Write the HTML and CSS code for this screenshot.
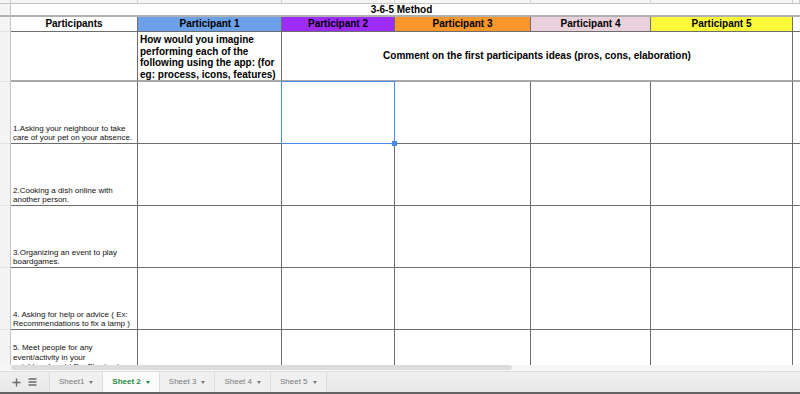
FILE: index.html
```html
<!DOCTYPE html>
<html>
<head>
<meta charset="utf-8">
<link rel="stylesheet" href="styles.css">
</head>
<body>
<div class="app">
  <div class="sheet">
    <!-- top strip (column headers cropped) -->
    <div class="c g strip"></div>
    <div class="c strip"></div>
    <div class="c strip"></div>
    <div class="c strip"></div>
    <div class="c strip"></div>
    <div class="c strip"></div>
    <div class="c strip"></div>
    <div class="c strip last"></div>

    <!-- title row -->
    <div class="c g trow"></div>
    <div class="c title">3-6-5 Method</div>

    <!-- header row -->
    <div class="c g"></div>
    <div class="c hd">Participants</div>
    <div class="c hd p1">Participant 1</div>
    <div class="c hd p2">Participant 2</div>
    <div class="c hd p3">Participant 3</div>
    <div class="c hd p4">Participant 4</div>
    <div class="c hd p5">Participant 5</div>
    <div class="c last"></div>

    <!-- question row -->
    <div class="c g qrow"></div>
    <div class="c qrow"></div>
    <div class="c qrow question">How would you imagine performing each of the following using the app: (for eg: process, icons, features)</div>
    <div class="c qrow comment">Comment on the first participants ideas (pros, cons, elaboration)</div>
    <div class="c qrow last"></div>

    <!-- data rows -->
    <div class="c g"></div>
    <div class="c item">1.Asking your neighbour to take care of your pet on your absence.</div>
    <div class="c"></div>
    <div class="c"></div>
    <div class="c"></div>
    <div class="c"></div>
    <div class="c"></div>
    <div class="c last"></div>

    <div class="c g"></div>
    <div class="c item">2.Cooking a dish online with another person.</div>
    <div class="c"></div>
    <div class="c"></div>
    <div class="c"></div>
    <div class="c"></div>
    <div class="c"></div>
    <div class="c last"></div>

    <div class="c g"></div>
    <div class="c item">3.Organizing an event to play boardgames.</div>
    <div class="c"></div>
    <div class="c"></div>
    <div class="c"></div>
    <div class="c"></div>
    <div class="c"></div>
    <div class="c last"></div>

    <div class="c g"></div>
    <div class="c item">4. Asking for help or advice ( Ex: Recommendations to fix a lamp )</div>
    <div class="c"></div>
    <div class="c"></div>
    <div class="c"></div>
    <div class="c"></div>
    <div class="c"></div>
    <div class="c last"></div>

    <div class="c g"></div>
    <div class="c item top">5. Meet people for any event/activity in your neighbourhood ( Ex: Sharing )</div>
    <div class="c"></div>
    <div class="c"></div>
    <div class="c"></div>
    <div class="c"></div>
    <div class="c"></div>
    <div class="c last"></div>

    <div class="selbox"><div class="handle"></div></div>
  </div>

  <div class="scroll"><div class="thumb"></div></div>

  <div class="tabbar">
    <div class="tools">
      <svg class="ico" width="9" height="9" viewBox="0 0 9 9"><path d="M4.5 0.5v8M0.5 4.5h8" stroke="#6b6b6b" stroke-width="1.4" fill="none"/></svg>
      <svg class="ico" width="9" height="8" viewBox="0 0 9 8"><path d="M0.5 1h8M0.5 4h8M0.5 7h8" stroke="#6b6b6b" stroke-width="1.3" fill="none"/></svg>
    </div>
    <div class="tab first"><span class="lbl">Sheet1</span><i class="arrow"></i></div>
    <div class="tab active"><span class="lbl">Sheet 2</span><i class="arrow"></i></div>
    <div class="tab"><span class="lbl">Sheet 3</span><i class="arrow"></i></div>
    <div class="tab"><span class="lbl">Sheet 4</span><i class="arrow"></i></div>
    <div class="tab"><span class="lbl">Sheet 5</span><i class="arrow"></i></div>
  </div>
</div>
</body>
</html>
```

FILE: styles.css
```css
html, body {
  margin: 0;
  padding: 0;
  background: #fff;
}

body {
  width: 800px;
  height: 394px;
  overflow: hidden;
  font-family: "Liberation Sans", Arial, sans-serif;
  color: #000;
}

.app {
  display: flex;
  flex-direction: column;
  width: 800px;
  height: 394px;
}

.sheet {
  position: relative;
  height: 365px;
  flex: none;
  overflow: hidden;
  display: grid;
  grid-template-columns: 11px 127px 144px 113px 136px 120px 142px 7px;
  grid-template-rows: 4px 13px 15px 50px 62px 62px 62px 62px 62px;
  background: #fff;
}

.c {
  box-sizing: border-box;
  border-right: 1px solid #6e6e6e;
  border-bottom: 1px solid #6e6e6e;
  min-width: 0;
  overflow: hidden;
}

.c.last {
  border-right: none;
}

.c.g {
  background: #f4f4f4;
  border-right: 1px solid #c4c4c4;
  border-bottom: 1px solid #e2e2e2;
}

.c.strip {
  background: #f6f6f6;
  border-right: 1px solid #cfcfcf;
  border-bottom: 1px solid #c4c4c4;
}

.c.trow {
  border-bottom: 2px solid #b0b0b0;
}

.title {
  grid-column: span 7;
  border-right: none;
  border-bottom: 2px solid #b0b0b0;
  font-size: 10px;
  font-weight: bold;
  line-height: 11px;
  text-align: center;
  padding-right: 8px;
}

.hd {
  font-size: 10px;
  font-weight: bold;
  line-height: 14px;
  text-align: center;
  white-space: nowrap;
}

.p1 { background: #6ca0e8; }
.p2 { background: #9e2cf7; }
.p3 { background: #f7962b; }
.p4 { background: #e9d1dc; }
.p5 { background: #fdfa3c; }

.qrow {
  border-bottom: 2px solid #a8a8a8;
}

.question {
  font-size: 10px;
  font-weight: bold;
  line-height: 11.5px;
  padding: 2px 2px 0 2px;
}

.comment {
  grid-column: span 4;
  display: flex;
  align-items: center;
  justify-content: center;
  font-size: 10px;
  font-weight: bold;
  padding-bottom: 2px;
}

.item {
  display: flex;
  flex-direction: column;
  justify-content: flex-end;
  font-size: 8px;
  line-height: 9.6px;
  padding: 0 2px 0 2px;
  color: #111;
}

.item.top {
  justify-content: flex-start;
  padding-top: 13px;
}

/* selection overlay on cell C4: absolutely positioned in its grid area */
.selbox {
  position: absolute;
  grid-column: 4 / 5;
  grid-row: 5 / 6;
  left: -1px;
  top: -1px;
  right: 0;
  bottom: 0;
  z-index: 10;
  box-sizing: border-box;
  border: 1px solid #4a89ef;
}

.handle {
  position: absolute;
  right: -3px;
  bottom: -3px;
  width: 5px;
  height: 5px;
  background: #4a89ef;
}

.scroll {
  flex: none;
  height: 7px;
  box-sizing: border-box;
  background: #f7f7f7;
  border-bottom: 1px solid #dedede;
  padding: 0 288px 1px 11px;
}

.thumb {
  height: 5px;
  border-radius: 3px;
  background: #dcdcdc;
}

.tabbar {
  flex: none;
  height: 22px;
  box-sizing: border-box;
  display: flex;
  background: linear-gradient(#efefef, #e9e9e9);
  border-bottom: 2px solid #626262;
}

.tools {
  width: 49px;
  display: flex;
  align-items: center;
  gap: 7px;
  padding-left: 12px;
  box-sizing: border-box;
}

.ico {
  display: block;
}

.tab {
  display: flex;
  align-items: center;
  gap: 5px;
  padding: 0 9px;
  font-size: 8px;
  line-height: 10px;
  color: #7a7a7a;
  background: #f0f0f0;
  border-right: 1px solid #dddddd;
}

.tab.first {
  border-left: 1px solid #dddddd;
}

.lbl {
  display: block;
  white-space: nowrap;
}

.tab.active {
  background: #fbfbfb;
  color: #1f8a3c;
  font-weight: bold;
}

.arrow {
  display: block;
  width: 0;
  height: 0;
  border-left: 2.5px solid transparent;
  border-right: 2.5px solid transparent;
  border-top: 3px solid #7a7a7a;
}

.tab.active .arrow {
  border-top-color: #1f8a3c;
}
```
